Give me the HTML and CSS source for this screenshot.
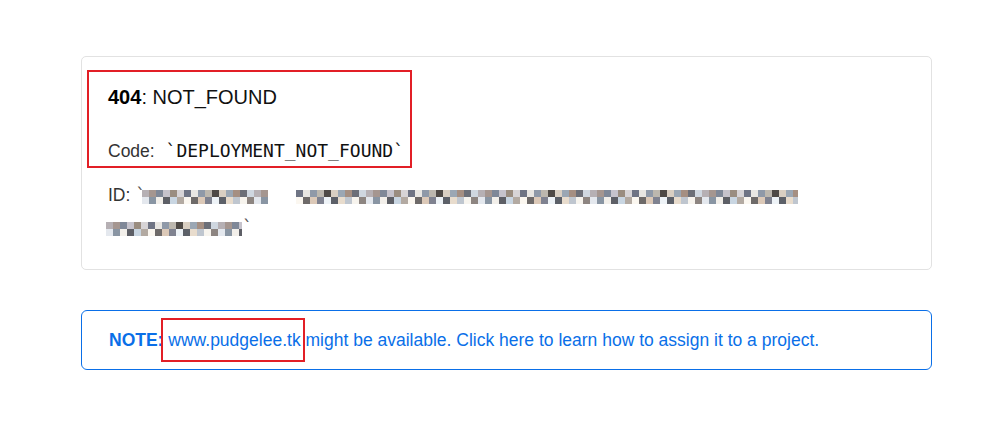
FILE: index.html
```html
<!DOCTYPE html>
<html lang="en">
<head>
<meta charset="utf-8">
<title>404: NOT_FOUND</title>
<link rel="stylesheet" href="styles.css">
</head>
<body>
<main class="page">
  <section class="card">
    <div class="marked">
      <p class="title"><strong>404</strong>: NOT_FOUND</p>
      <p class="code-line">Code: <code>`DEPLOYMENT_NOT_FOUND`</code></p>
    </div>
    <p class="id-line">ID: <code class="tick">`</code><svg class="mosaic m1" width="656" height="18" viewBox="0 0 656 18" aria-hidden="true">
        <defs>
          <pattern id="pa" width="112" height="18" patternUnits="userSpaceOnUse">
            <rect x="0" y="2" width="7" height="7" fill="#b6b0b4"/>
            <rect x="7" y="2" width="7" height="7" fill="#a59690"/>
            <rect x="14" y="2" width="7" height="7" fill="#7f8898"/>
            <rect x="21" y="2" width="7" height="7" fill="#c6c3cc"/>
            <rect x="28" y="2" width="7" height="7" fill="#9a8d80"/>
            <rect x="35" y="2" width="7" height="7" fill="#d7d4d6"/>
            <rect x="42" y="2" width="7" height="7" fill="#6f7484"/>
            <rect x="49" y="2" width="7" height="7" fill="#e8e6e2"/>
            <rect x="56" y="2" width="7" height="7" fill="#8f99a8"/>
            <rect x="63" y="2" width="7" height="7" fill="#bcb7ae"/>
            <rect x="70" y="2" width="7" height="7" fill="#4f4a46"/>
            <rect x="77" y="2" width="7" height="7" fill="#d9cfc2"/>
            <rect x="84" y="2" width="7" height="7" fill="#9ba7b4"/>
            <rect x="91" y="2" width="7" height="7" fill="#a58f82"/>
            <rect x="98" y="2" width="7" height="7" fill="#6c6f78"/>
            <rect x="105" y="2" width="7" height="7" fill="#cfd7e0"/>
            <rect x="0" y="9" width="7" height="7" fill="#e4e8ee"/>
            <rect x="7" y="9" width="7" height="7" fill="#8995a3"/>
            <rect x="14" y="9" width="7" height="7" fill="#f2efea"/>
            <rect x="21" y="9" width="7" height="7" fill="#5d5f66"/>
            <rect x="28" y="9" width="7" height="7" fill="#c9d6e2"/>
            <rect x="35" y="9" width="7" height="7" fill="#b3aaa2"/>
            <rect x="42" y="9" width="7" height="7" fill="#fbf7f0"/>
            <rect x="49" y="9" width="7" height="7" fill="#6e6a69"/>
            <rect x="56" y="9" width="7" height="7" fill="#dcc9b8"/>
            <rect x="63" y="9" width="7" height="7" fill="#7f8290"/>
            <rect x="70" y="9" width="7" height="7" fill="#eef3f7"/>
            <rect x="77" y="9" width="7" height="7" fill="#5c6068"/>
            <rect x="84" y="9" width="7" height="7" fill="#e8dccd"/>
            <rect x="91" y="9" width="7" height="7" fill="#bfc6cf"/>
            <rect x="98" y="9" width="7" height="7" fill="#f7f4ee"/>
            <rect x="105" y="9" width="7" height="7" fill="#8d8581"/>
          </pattern>
        </defs>
        <rect x="0" y="0" width="126" height="18" fill="url(#pa)"/>
        <rect x="154" y="0" width="502" height="18" fill="url(#pa)"/>
      </svg><br><svg class="mosaic m2" width="136" height="18" viewBox="0 0 136 18" aria-hidden="true">
        <rect x="0" y="0" width="136" height="18" fill="url(#pa)"/>
      </svg><code class="tick">`</code></p>
  </section>

  <aside class="note">
    <strong>NOTE:</strong> <span class="domain">www.pudgelee.tk</span> might be available. Click here to learn how to assign it to a project.
  </aside>
</main>
</body>
</html>
```

FILE: styles.css
```css
* { box-sizing: border-box; }

html, body {
  margin: 0;
  padding: 0;
  background: #ffffff;
}

body {
  font-family: "Liberation Sans", Arial, sans-serif;
  font-size: 17.5px;
  color: #333333;
}

.page {
  width: 851px;
  margin-left: 81px;
  padding-top: 56px;
}

p { margin: 0; }

.card {
  border: 1px solid #e2e2e2;
  border-radius: 5px;
  padding: 13px 24px 26px 5px;
}

.marked {
  position: relative;
  width: 325px;
  height: 98px;
  padding: 15px 0 0 21px;
}

.marked::after {
  content: "";
  position: absolute;
  inset: 0;
  border: 2px solid #e21f26;
}

.title {
  font-size: 20px;
  line-height: 24px;
  color: #111111;
}

.title strong { color: #000000; }

.code-line {
  margin-top: 30px;
  line-height: 24px;
}

code {
  font-family: "DejaVu Sans Mono", "Liberation Mono", monospace;
  font-size: 18px;
  color: #111111;
}

.code-line code { margin-left: 6px; }

.id-line {
  margin-top: 11px;
  padding-left: 21px;
  line-height: 32px;
  color: #333333;
}

.tick { color: #555555; }

.mosaic {
  display: inline-block;
  vertical-align: -5px;
}

.m1 { margin-left: -4px; }
.m2 { margin-left: -2px; }

.note {
  margin-top: 40px;
  height: 60px;
  border: 1px solid #0a6fe8;
  border-radius: 6px;
  padding: 17px 20px 0 27px;
  line-height: 24px;
  color: #0a6fe8;
}

.note strong { font-weight: 700; }

.domain { position: relative; }

.domain::after {
  content: "";
  position: absolute;
  left: -7px;
  right: -4px;
  top: -12px;
  bottom: -12px;
  border: 2px solid #e21f26;
}
```
